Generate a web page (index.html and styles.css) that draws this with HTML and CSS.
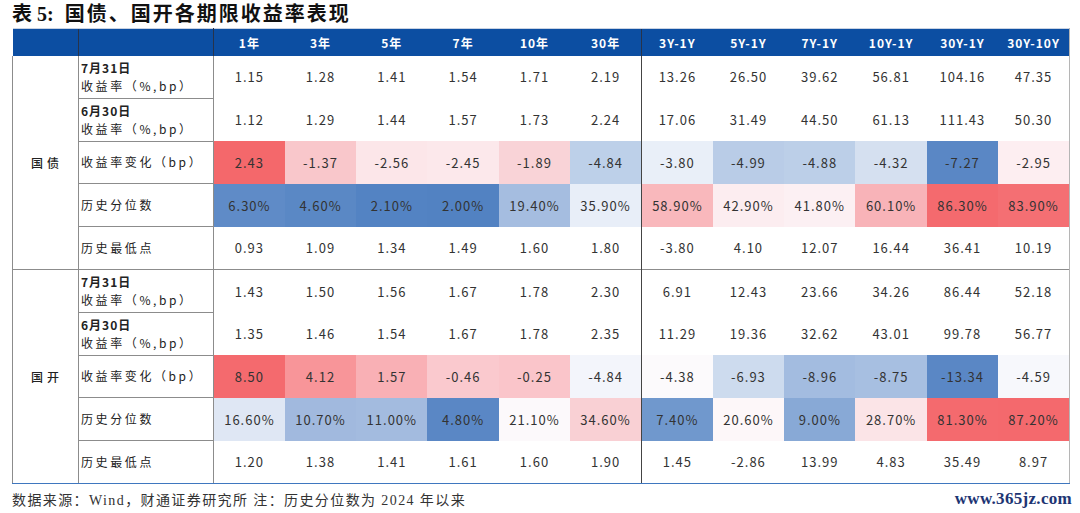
FILE: index.html
```html
<!DOCTYPE html>
<html lang="zh-CN">
<head>
<meta charset="utf-8">
<title>国债、国开各期限收益率表现</title>
<link rel="stylesheet" href="styles.css">
</head>
<body>
<div class="page">
  <h1 class="title"><span class="tno">表 5:</span> 国债、国开各期限收益率表现</h1>
  <table class="t">
    <colgroup>
      <col class="c-grp"><col class="c-lbl">
      <col class="c-d"><col class="c-d"><col class="c-d"><col class="c-d"><col class="c-d"><col class="c-d">
      <col class="c-d"><col class="c-d"><col class="c-d"><col class="c-d"><col class="c-d"><col class="c-d">
    </colgroup>
    <thead>
      <tr>
        <th class="h-grp"></th><th class="h-lbl"></th>
        <th>1年</th><th>3年</th><th>5年</th><th>7年</th><th>10年</th><th>30年</th>
        <th class="sep">3Y-1Y</th><th>5Y-1Y</th><th>7Y-1Y</th><th>10Y-1Y</th><th>30Y-1Y</th><th class="last">30Y-10Y</th>
      </tr>
    </thead>
    <tbody class="g">
      <tr>
        <td class="grp" rowspan="5">国债</td>
        <td class="lbl"><b>7月31日</b><br>收益率（%,bp）</td>
        <td>1.15</td><td>1.28</td><td>1.41</td><td>1.54</td><td>1.71</td><td>2.19</td>
        <td class="sep">13.26</td><td>26.50</td><td>39.62</td><td>56.81</td><td>104.16</td><td class="last">47.35</td>
      </tr>
      <tr>
        <td class="lbl"><b>6月30日</b><br>收益率（%,bp）</td>
        <td>1.12</td><td>1.29</td><td>1.44</td><td>1.57</td><td>1.73</td><td>2.24</td>
        <td class="sep">17.06</td><td>31.49</td><td>44.50</td><td>61.13</td><td>111.43</td><td class="last">50.30</td>
      </tr>
      <tr>
        <td class="lbl">收益率变化（bp）</td>
        <td style="background:#f4686b">2.43</td>
        <td style="background:#f9c7cb">-1.37</td>
        <td style="background:#fce6e9">-2.56</td>
        <td style="background:#fce8eb">-2.45</td>
        <td style="background:#f9d3d7">-1.89</td>
        <td style="background:#bdd0e9">-4.84</td>
        <td class="sep" style="background:#e9eff8">-3.80</td>
        <td style="background:#b9cce7">-4.99</td>
        <td style="background:#bccfe8">-4.88</td>
        <td style="background:#d5e0f0">-4.32</td>
        <td style="background:#5a87c5">-7.27</td>
        <td class="last" style="background:#fdeef1">-2.95</td>
      </tr>
      <tr>
        <td class="lbl">历史分位数</td>
        <td style="background:#5f8bc7">6.30%</td>
        <td style="background:#5a88c5">4.60%</td>
        <td style="background:#5383c3">2.10%</td>
        <td style="background:#5282c2">2.00%</td>
        <td style="background:#a5bde0">19.40%</td>
        <td style="background:#e8eef8">35.90%</td>
        <td class="sep" style="background:#f9b8bc">58.90%</td>
        <td style="background:#fcedf0">42.90%</td>
        <td style="background:#fcf0f3">41.80%</td>
        <td style="background:#f8b3b8">60.10%</td>
        <td style="background:#f46a6e">86.30%</td>
        <td class="last" style="background:#f46f73">83.90%</td>
      </tr>
      <tr>
        <td class="lbl">历史最低点</td>
        <td>0.93</td><td>1.09</td><td>1.34</td><td>1.49</td><td>1.60</td><td>1.80</td>
        <td class="sep">-3.80</td><td>4.10</td><td>12.07</td><td>16.44</td><td>36.41</td><td class="last">10.19</td>
      </tr>
    </tbody>
    <tbody class="g g2">
      <tr>
        <td class="grp" rowspan="5">国开</td>
        <td class="lbl"><b>7月31日</b><br>收益率（%,bp）</td>
        <td>1.43</td><td>1.50</td><td>1.56</td><td>1.67</td><td>1.78</td><td>2.30</td>
        <td class="sep">6.91</td><td>12.43</td><td>23.66</td><td>34.26</td><td>86.44</td><td class="last">52.18</td>
      </tr>
      <tr>
        <td class="lbl"><b>6月30日</b><br>收益率（%,bp）</td>
        <td>1.35</td><td>1.46</td><td>1.54</td><td>1.67</td><td>1.78</td><td>2.35</td>
        <td class="sep">11.29</td><td>19.36</td><td>32.62</td><td>43.01</td><td>99.78</td><td class="last">56.77</td>
      </tr>
      <tr>
        <td class="lbl">收益率变化（bp）</td>
        <td style="background:#f46a6e">8.50</td>
        <td style="background:#f89599">4.12</td>
        <td style="background:#f9b0b5">1.57</td>
        <td style="background:#fac9ce">-0.46</td>
        <td style="background:#fac5ca">-0.25</td>
        <td style="background:#f3f5fb">-4.84</td>
        <td class="sep" style="background:#fcfafc">-4.38</td>
        <td style="background:#cddbee">-6.93</td>
        <td style="background:#a3bce0">-8.96</td>
        <td style="background:#a7bfe1">-8.75</td>
        <td style="background:#5a87c5">-13.34</td>
        <td class="last" style="background:#f7f8fc">-4.59</td>
      </tr>
      <tr>
        <td class="lbl">历史分位数</td>
        <td style="background:#dfe7f4">16.60%</td>
        <td style="background:#a1b9de">10.70%</td>
        <td style="background:#a3bbdf">11.00%</td>
        <td style="background:#5a87c5">4.80%</td>
        <td style="background:#fcf9fb">21.10%</td>
        <td style="background:#f9d0d4">34.60%</td>
        <td class="sep" style="background:#7098cd">7.40%</td>
        <td style="background:#fdf7f9">20.60%</td>
        <td style="background:#88a9d6">9.00%</td>
        <td style="background:#fbe4e7">28.70%</td>
        <td style="background:#f46a6e">81.30%</td>
        <td class="last" style="background:#f4696d">87.20%</td>
      </tr>
      <tr>
        <td class="lbl">历史最低点</td>
        <td>1.20</td><td>1.38</td><td>1.41</td><td>1.61</td><td>1.60</td><td>1.90</td>
        <td class="sep">1.45</td><td>-2.86</td><td>13.99</td><td>4.83</td><td>35.49</td><td class="last">8.97</td>
      </tr>
    </tbody>
  </table>
  <div class="foot">
    <p class="src">数据来源：Wind，财通证券研究所 注：历史分位数为 2024 年以来</p>
    <span class="wm">www.365jz.com</span>
  </div>
</div>
</body>
</html>
```

FILE: styles.css
```css
* { box-sizing: border-box; }
html, body { margin: 0; padding: 0; background: #ffffff; }
body { width: 1080px; height: 513px; overflow: hidden; }

.page { padding-left: 12px; }

.title {
  margin: 0;
  height: 28px;
  line-height: 28px;
  font-family: "Liberation Serif", "Noto Sans CJK SC", serif;
  font-size: 20px;
  font-weight: 700;
  color: #111;
  letter-spacing: 2px;
  white-space: nowrap;
}
.title .tno { letter-spacing: 0; margin-right: 4px; }

.t {
  width: 1057px;
  table-layout: fixed;
  border-collapse: collapse;
  font-family: "Noto Sans CJK SC", "Noto Sans", sans-serif;
}
.c-grp { width: 66px; }
.c-lbl { width: 135px; }
.c-d { width: 71.33px; }

.t thead th {
  height: 27px;
  padding: 0;
  background: #0c4ea2;
  color: #ffffff;
  font-size: 12px;
  font-weight: 700;
  letter-spacing: 1px;
  text-align: center;
  vertical-align: middle;
  border-top: 1px solid #c9d3e3;
}
.t thead th.h-lbl { border-left: 1px solid #27334a; border-right: 1px solid #27334a; }
.t thead th.sep { border-left: 1px solid #27334a; }
.t thead th.last { border-right: 1px solid #b5b5b5; }

.t tbody tr { height: 42.8px; }
.t td {
  padding: 0;
  text-align: center;
  vertical-align: middle;
  font-size: 13px;
  color: #333;
  letter-spacing: 1px;
  white-space: nowrap;
}
.t td.grp {
  border-left: 1px solid #8c8c8c;
  border-right: 1px solid #8c8c8c;
  font-size: 12px;
  font-weight: 500;
  letter-spacing: 4px;
  color: #222;
  padding-left: 3px;
}
.t td.lbl {
  text-align: left;
  padding-left: 2px;
  font-size: 12px;
  line-height: 18px;
  letter-spacing: 2.6px;
  color: #222;
  border-right: 1px solid #8c8c8c;
  border-bottom: 1px solid #8c8c8c;
}
.t td.lbl b { font-weight: 700; letter-spacing: 1px; }
.t td.sep { border-left: 1px solid #444; }
.t td.last { border-right: 1px solid #b5b5b5; }

.t tbody.g2 tr:first-child td { border-top: 1px solid #8c8c8c; }
.t tbody.g2 tr:last-child td { border-bottom: 1px solid #3f77bf; }
.t tbody.g2 td.grp { border-bottom: 1px solid #3f77bf; }

.foot {
  width: 1060px;
  height: 30px;
  display: flex;
  align-items: center;
  justify-content: space-between;
}
.src {
  margin: 0;
  font-family: "Liberation Serif", "Noto Sans CJK SC", serif;
  font-size: 14px;
  letter-spacing: 1.4px;
  color: #333;
  white-space: nowrap;
}
.wm {
  font-family: "Liberation Serif", "DejaVu Serif", serif;
  font-size: 17px;
  font-weight: 700;
  color: #1d3573;
  letter-spacing: 0.3px;
}
```
